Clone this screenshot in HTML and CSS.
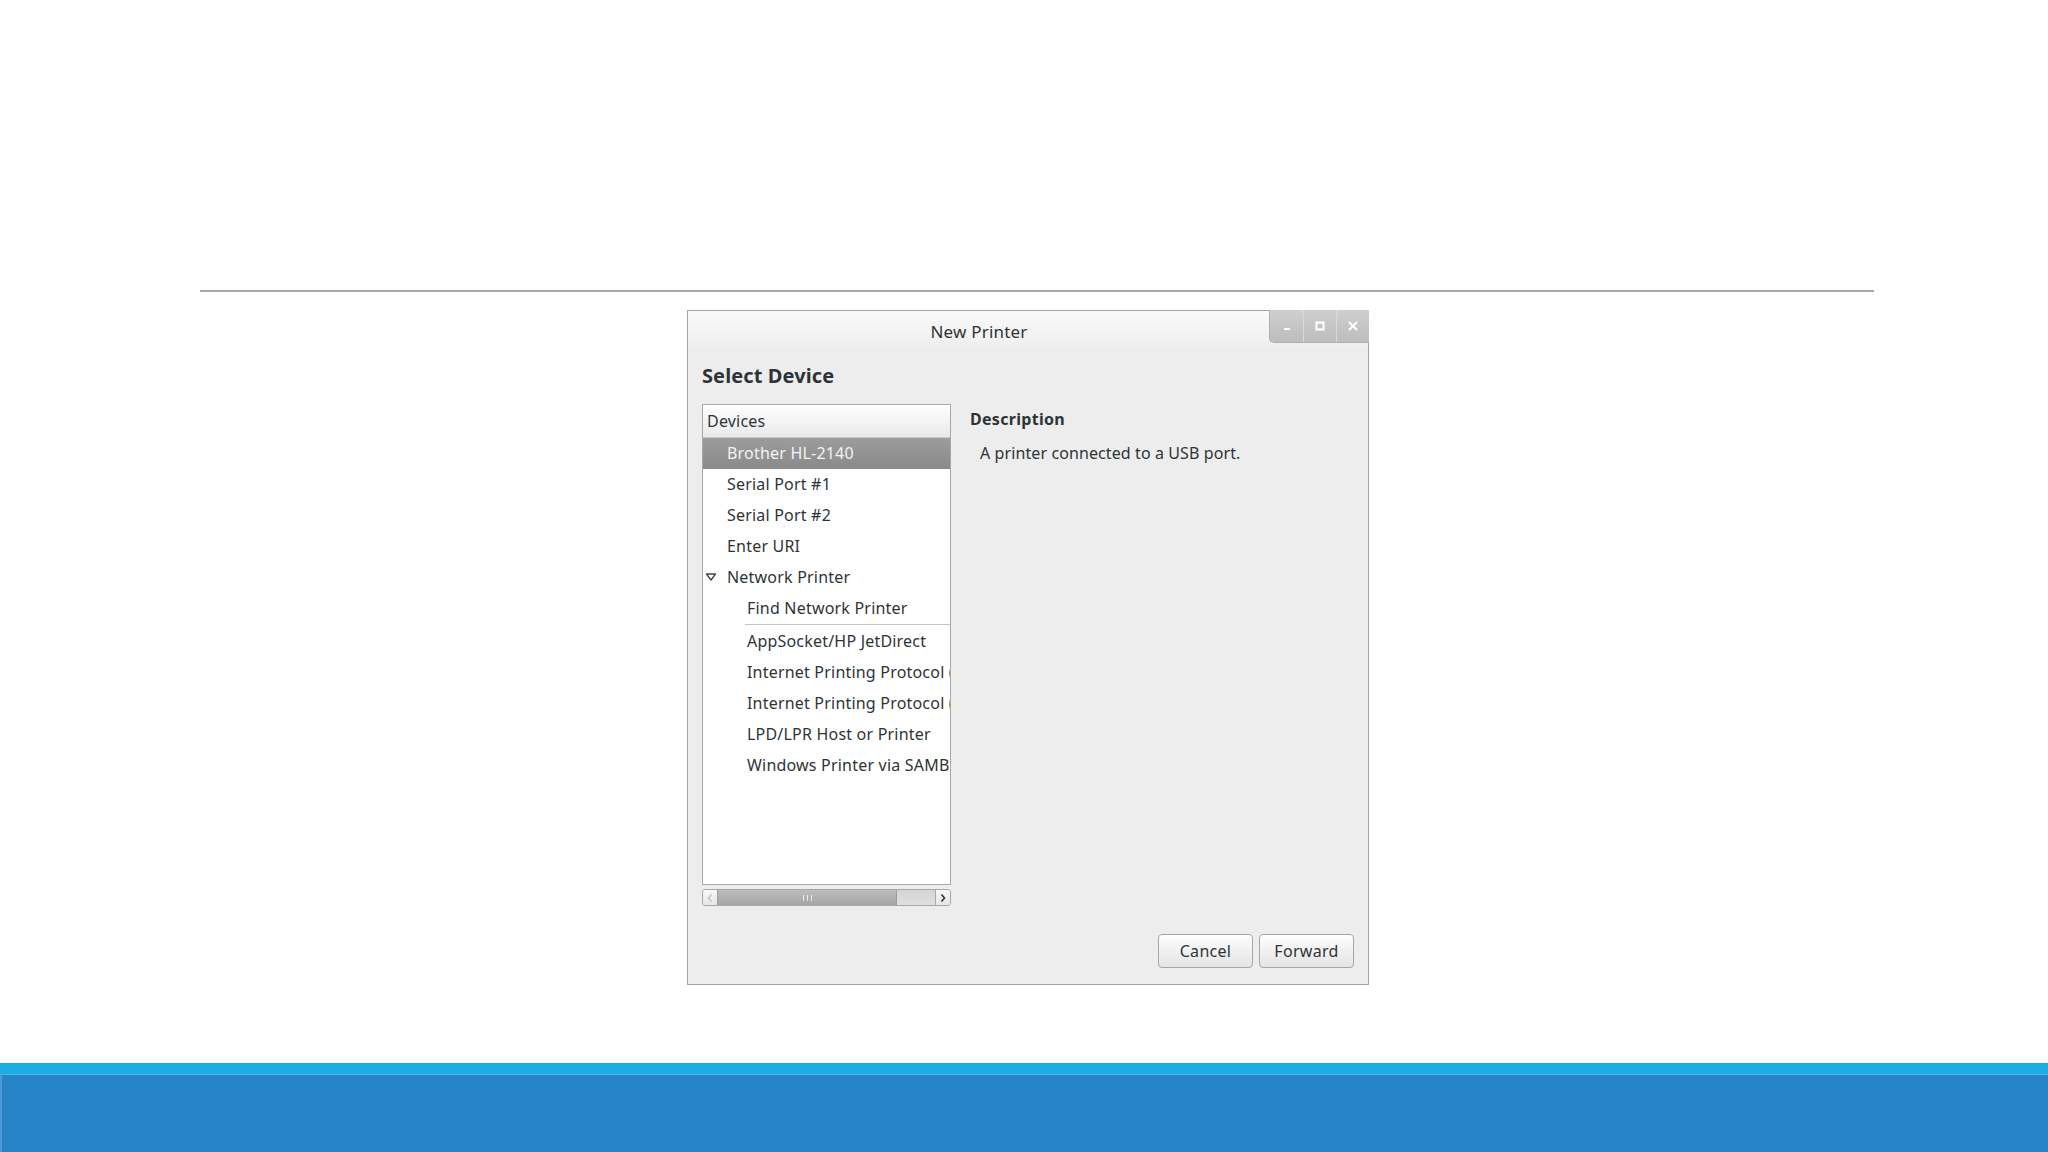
FILE: index.html
```html
<!DOCTYPE html>
<html lang="en">
<head>
  <meta charset="UTF-8">
  <title>New Printer</title>
  <link rel="stylesheet" href="styles.css">
</head>
<body>
  <div class="slide">
    <div class="rule"></div>

    <div class="window">
      <div class="titlebar">
        <span class="title">New Printer</span>
        <div class="wm-buttons">
          <button class="wm-btn">
            <svg width="12" height="12" viewBox="0 0 12 12"><rect x="3" y="8" width="6" height="2" fill="#fff"/></svg>
          </button>
          <button class="wm-btn">
            <svg width="12" height="12" viewBox="0 0 12 12"><rect x="2.5" y="2.5" width="7" height="7" fill="none" stroke="#fff" stroke-width="2"/></svg>
          </button>
          <button class="wm-btn">
            <svg width="12" height="12" viewBox="0 0 12 12"><path d="M2 2 L10 10 M10 2 L2 10" stroke="#fff" stroke-width="2"/></svg>
          </button>
        </div>
      </div>

      <div class="content">
        <h1 class="heading">Select Device</h1>

        <div class="main">
          <div class="devices-col">
            <div class="devices">
              <div class="devices-head">Devices</div>
              <div class="row level1 selected">Brother HL-2140</div>
              <div class="row level1">Serial Port #1</div>
              <div class="row level1">Serial Port #2</div>
              <div class="row level1">Enter URI</div>
              <div class="row level1">
                <svg class="expander" width="12" height="10" viewBox="0 0 12 10"><path d="M1.5 2 L10.5 2 L6 8 Z" fill="none" stroke="#444" stroke-width="1.3" stroke-linejoin="round"/></svg>
                Network Printer
              </div>
              <div class="row level2">Find Network Printer</div>
              <div class="sep-row"><div class="sep"></div></div>
              <div class="row level2">AppSocket/HP JetDirect</div>
              <div class="row level2">Internet Printing Protocol (</div>
              <div class="row level2">Internet Printing Protocol (</div>
              <div class="row level2">LPD/LPR Host or Printer</div>
              <div class="row level2">Windows Printer via SAMB</div>
            </div>

            <div class="hscroll">
              <div class="arrow left">
                <svg width="8" height="10" viewBox="0 0 8 10"><path d="M5.5 1.5 L2.5 5 L5.5 8.5" fill="none" stroke="#c4c4c4" stroke-width="1.4"/></svg>
              </div>
              <div class="trough">
                <div class="thumb"><span class="grip"></span></div>
              </div>
              <div class="arrow right">
                <svg width="8" height="10" viewBox="0 0 8 10"><path d="M2.5 1.5 L5.5 5 L2.5 8.5" fill="none" stroke="#333" stroke-width="1.6"/></svg>
              </div>
            </div>
          </div>

          <div class="desc">
            <div class="desc-title">Description</div>
            <div class="desc-text">A printer connected to a USB port.</div>
          </div>
        </div>

        <div class="actions">
          <button class="btn">Cancel</button>
          <button class="btn">Forward</button>
        </div>
      </div>
    </div>
  </div>

  <div class="band-light"></div>
  <div class="band-dark"></div>
</body>
</html>
```

FILE: styles.css
```css
body {
  margin: 0;
  background-color: #fff;
  font-family: "Noto Sans", "DejaVu Sans", sans-serif;
  color: #2e3436;
}

.slide {
  height: 1063px;
  display: flex;
  flex-direction: column;
  overflow: hidden;
}

.rule {
  margin: 290px 174px 0 200px;
  height: 2px;
  background-color: #a6a6a6;
}

/* dialog window */
.window {
  position: relative;
  margin: 18px 0 0 687px;
  width: 680px;
  height: 673px;
  border: 1px solid #a3a3a3;
  background-color: #ededed;
  display: flex;
  flex-direction: column;
}

/* title is centred in the space left of the wm buttons */
.titlebar {
  height: 40px;
  display: flex;
  justify-content: center;
  align-items: center;
  padding-right: 98px;
  background: linear-gradient(#fafafa, #ededed);
}

.title {
  font-size: 17px;
  letter-spacing: 0.2px;
  color: #2e3436;
}

.wm-buttons {
  position: absolute;
  top: -1px;
  right: -1px;
  display: flex;
  height: 32px;
  border-bottom-left-radius: 5px;
  overflow: hidden;
  background: linear-gradient(#cfcfcf, #bdbdbd);
  border-left: 1px solid #b0b0b0;
  border-bottom: 1px solid #b0b0b0;
}

.wm-btn {
  width: 33px;
  height: 32px;
  padding: 0;
  border: none;
  background: transparent;
  display: flex;
  align-items: center;
  justify-content: center;
}

.wm-btn + .wm-btn {
  border-left: 1px solid #dadada;
}

.content {
  flex: 1;
  display: flex;
  flex-direction: column;
  padding: 12px 14px 16px 14px;
}

.heading {
  margin: 0 0 16px 0;
  font-size: 20px;
  line-height: 25px;
  font-weight: bold;
  letter-spacing: 0.1px;
  color: #2e3436;
}

.main {
  flex: 1;
  display: flex;
  gap: 19px;
}

/* device list */
.devices-col {
  width: 249px;
  display: flex;
  flex-direction: column;
}

.devices {
  height: 479px;
  border: 1px solid #a8a8a8;
  background-color: #fff;
  overflow: hidden;
  font-size: 16px;
  letter-spacing: 0.2px;
}

.devices-head {
  height: 32px;
  line-height: 32px;
  padding-left: 4px;
  border-bottom: 1px solid #c8c8c8;
  background: linear-gradient(#ffffff, #e9e9e9);
}

.row {
  height: 31px;
  line-height: 31px;
  white-space: nowrap;
  overflow: hidden;
  position: relative;
}

.row.level1 {
  padding-left: 24px;
}

.row.level2 {
  padding-left: 44px;
}

.row.selected {
  background: linear-gradient(#9c9c9c, #8a8a8a);
  color: #f2f2f2;
}

.expander {
  position: absolute;
  left: 2px;
  top: 10px;
}

.sep-row {
  height: 2px;
  padding-left: 42px;
}

.sep {
  height: 1px;
  background-color: #c6c6c6;
}

/* horizontal scrollbar */
.hscroll {
  margin-top: 4px;
  height: 15px;
  display: flex;
  border: 1px solid #a8a8a8;
  border-radius: 3px;
  overflow: hidden;
  background-color: #d8d8d8;
}

.arrow {
  width: 14px;
  display: flex;
  align-items: center;
  justify-content: center;
  background: linear-gradient(#f7f7f7, #e6e6e6);
}

.arrow.right {
  border-left: 1px solid #a8a8a8;
}

.trough {
  flex: 1;
  display: flex;
  background: linear-gradient(#d4d4d4, #e0e0e0);
}

.thumb {
  width: 178px;
  display: flex;
  align-items: center;
  justify-content: center;
  background: linear-gradient(#bdbdbd, #a5a5a5);
  border-left: 1px solid #9d9d9d;
  border-right: 1px solid #9d9d9d;
}

.grip {
  width: 7px;
  height: 6px;
  border-left: 1px solid #eee;
  border-right: 1px solid #eee;
  position: relative;
}

.grip::after {
  content: "";
  position: absolute;
  left: 3px;
  top: 0;
  width: 1px;
  height: 6px;
  background-color: #eee;
}

/* description */
.desc {
  flex: 1;
  padding-top: 5px;
}

.desc-title {
  font-size: 16px;
  font-weight: bold;
  line-height: 20px;
  letter-spacing: 0.3px;
}

.desc-text {
  font-size: 16px;
  margin: 13px 0 0 10px;
  letter-spacing: 0.1px;
}

/* dialog buttons */
.actions {
  display: flex;
  justify-content: flex-end;
  gap: 6px;
  margin-top: 26px;
}

.btn {
  width: 95px;
  height: 34px;
  font-family: inherit;
  font-size: 16px;
  letter-spacing: 0.3px;
  color: #2e3436;
  border: 1px solid #a6a6a6;
  border-radius: 4px;
  background: linear-gradient(#fdfdfd, #e4e4e4);
  box-shadow: 0 1px 0 #fff inset;
}

/* slide footer bands */
.band-light {
  height: 11px;
  background-color: #1cade4;
}

.band-dark {
  height: 78px;
  background-color: #2683c6;
  border-top: 1px solid #5ab0e6;
  border-left: 2px solid #4a9ad6;
  box-sizing: border-box;
}
```
